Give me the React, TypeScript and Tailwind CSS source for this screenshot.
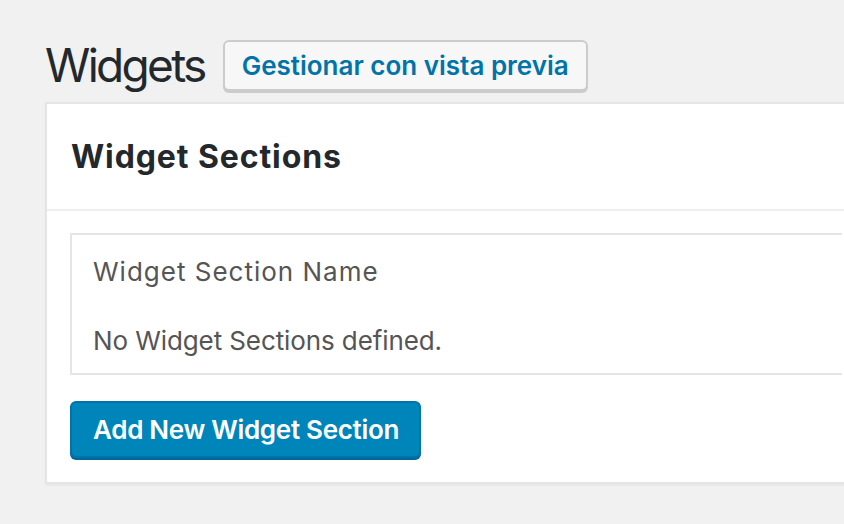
export default function App() {
  return (
    <div className="min-h-[524px] w-[844px] overflow-hidden bg-[#f1f1f1] pl-[45px] pt-[40px] font-['Inter',sans-serif]">
      <div className="flex items-center">
        <h1 className="text-[46px] leading-[51px] font-normal text-[#23282d] tracking-[-2.7px]">Widgets</h1>
        <button className="ml-[18px] h-[51px] px-[17px] rounded-[6px] border-2 border-[#ccc] bg-[#f7f7f7] text-[26px] font-semibold text-[#0073aa] shadow-[0_2px_0_#ccc]">
          Gestionar con vista previa
        </button>
      </div>

      <div className="mt-[11px] w-[820px] border-2 border-r-0 border-[#e5e5e5] bg-white shadow-[0_2px_2px_rgba(0,0,0,0.04)]">
        <div className="h-[107px] flex items-center px-[24px] border-b-2 border-[#eee]">
          <h2 className="text-[32px] font-bold text-[#23282d] tracking-[0.9px]">Widget Sections</h2>
        </div>
        <div className="px-[23px] pt-[22px] pb-[24px]">
          <div className="border-2 border-r-0 border-[#e5e5e5]">
            <div className="h-[70px] flex items-center px-[21px] pt-[2px] text-[26px] text-[#555] tracking-[1px]">Widget Section Name</div>
            <div className="h-[68px] flex items-center px-[21px] pt-[2px] text-[26px] text-[#555] tracking-[-0.1px]">No Widget Sections defined.</div>
          </div>
          <button className="mt-[26px] h-[57px] pl-[21px] pr-[20px] rounded-[6px] border-2 border-[#0073aa] bg-[#0085ba] text-[26px] font-semibold text-white tracking-[-0.3px] shadow-[0_2px_0_#006799]">
            Add New Widget Section
          </button>
        </div>
      </div>
    </div>
  );
}
